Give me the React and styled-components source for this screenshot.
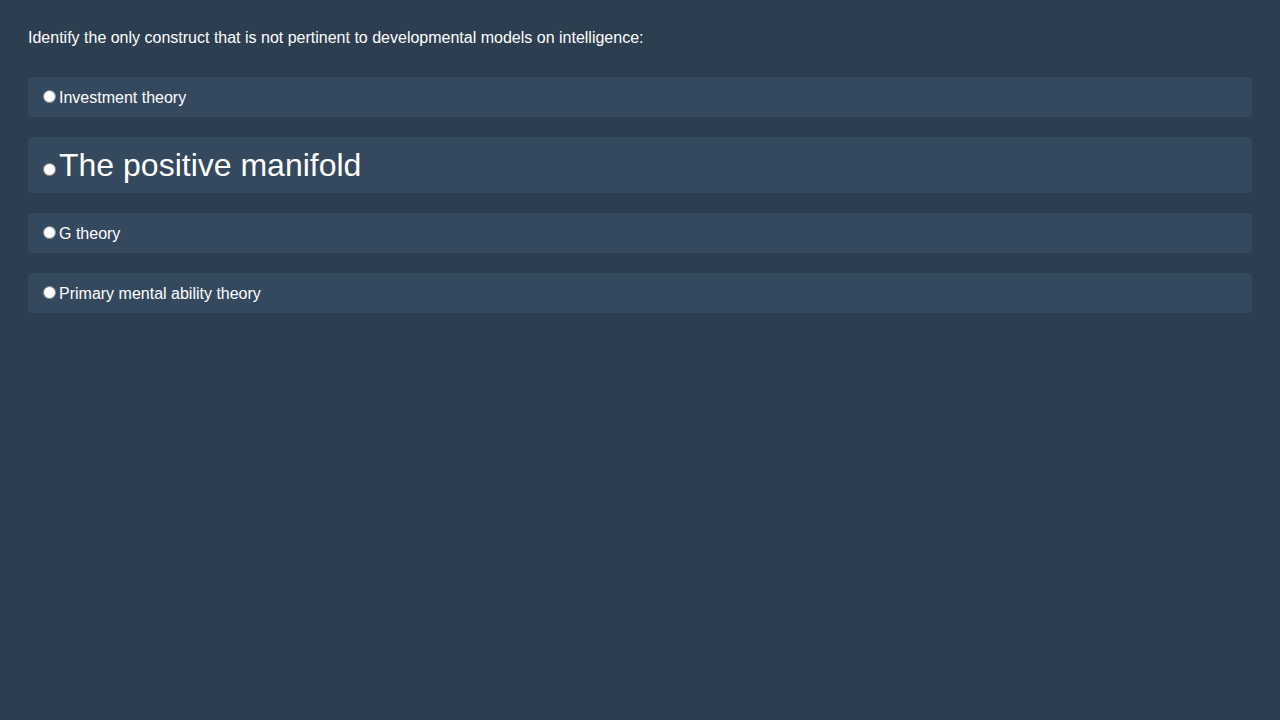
import React from "react";
import styled, { createGlobalStyle } from "styled-components";

const Global = createGlobalStyle`
  html, body { margin: 0; padding: 0; background: #2c3e50; }
  body { font-family: "Liberation Sans", Arial, sans-serif; color: #fff; min-height: 720px; }
`;

const Page = styled.div`
  padding: 28px;
  min-height: 720px;
  box-sizing: border-box;
  background: #2c3e50;
`;

const Question = styled.p`
  margin: 0 0 29px;
  font-size: 16px;
  line-height: 20px;
`;

const Options = styled.div`
  display: flex;
  flex-direction: column;
  gap: 20px;
`;

const Option = styled.label`
  display: block;
  background: #34495e;
  border-radius: 4px;
  padding: 10px;
  font-size: ${(p) => (p.$big ? "32px" : "16px")};
  line-height: ${(p) => (p.$big ? "36px" : "normal")};
  color: #fff;
`;

const Radio = styled.input.attrs({ type: "radio" })`
  margin: 3px 3px 0 5px;
  width: 13px;
  height: 13px;
  vertical-align: baseline;
`;

const options = [
  { text: "Investment theory" },
  { text: "The positive manifold", big: true },
  { text: "G theory" },
  { text: "Primary mental ability theory" },
];

export default function App() {
  return (
    <Page>
      <Global />
      <Question>
        Identify the only construct that is not pertinent to developmental models on intelligence:
      </Question>
      <Options>
        {options.map((o) => (
          <Option key={o.text} $big={o.big}>
            <Radio name="q" />
            {o.text}
          </Option>
        ))}
      </Options>
    </Page>
  );
}
